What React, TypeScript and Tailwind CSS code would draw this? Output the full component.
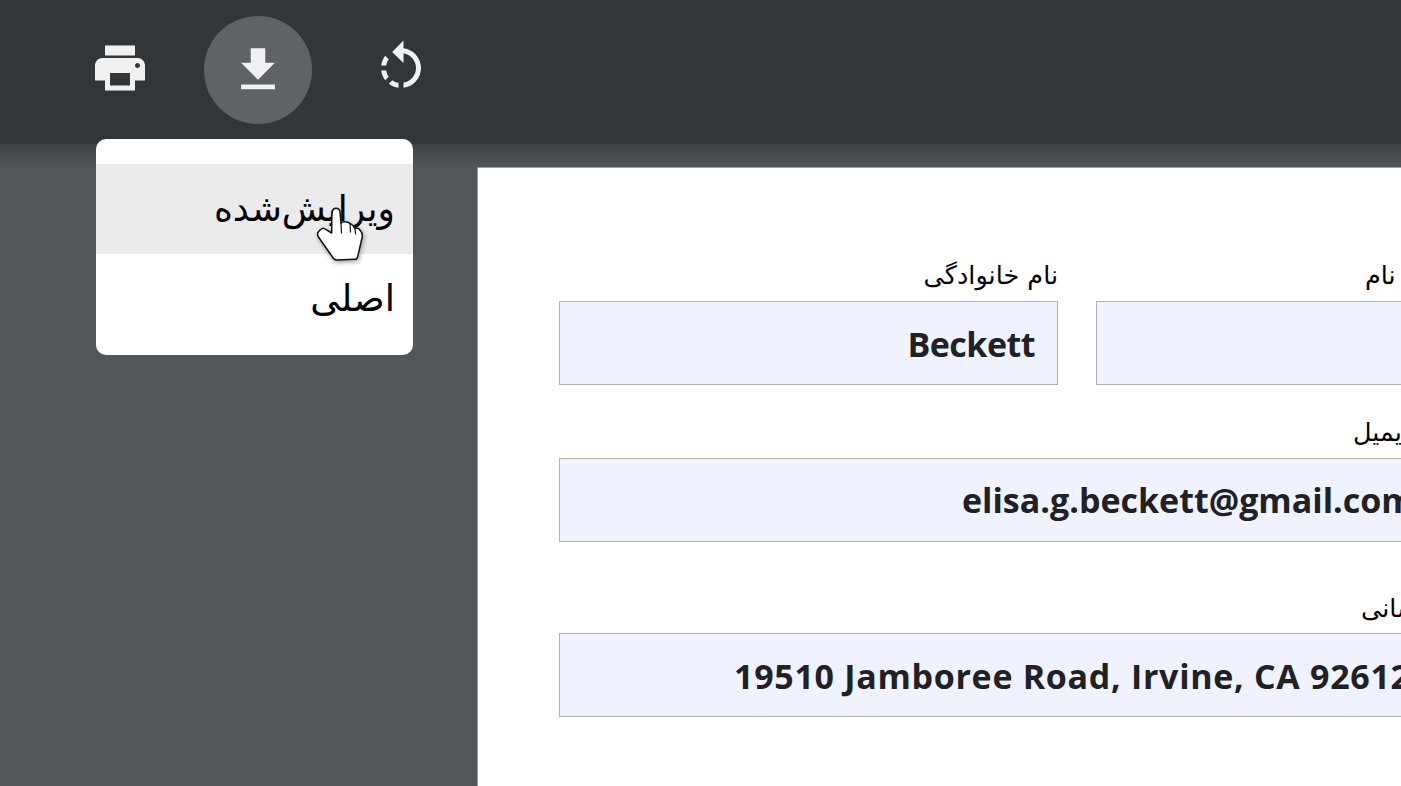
const arabic = "font-['DejaVu_Sans','Noto_Sans',sans-serif]";
const value = "font-['Open_Sans','Noto_Sans',sans-serif] font-bold text-[34px] text-[#202124]";

function Field({ className, children }: { className?: string; children?: React.ReactNode }) {
  return (
    <div className={`h-[84px] bg-[#f0f2fd] border border-[#b2b2b2] flex items-center whitespace-nowrap overflow-hidden ${value} ${className ?? ''}`}>
      {children}
    </div>
  );
}

export default function App() {
  return (
    <div className="relative w-[1401px] h-[786px] overflow-hidden bg-[#525659]">
      {/* Toolbar */}
      <header className="relative h-[144px] bg-[#323639] flex items-start pt-4 pl-[66px] text-[#f1f1f1]">
        <button className="w-[108px] h-[108px] rounded-full flex items-center justify-center">
          <svg width="60" height="60" viewBox="0 0 24 24" fill="currentColor" className="-mt-1">
            <path d="M19 8H5c-1.66 0-3 1.34-3 3v6h4v4h12v-4h4v-6c0-1.66-1.34-3-3-3zm-3 11H8v-5h8v5zm3-7c-.55 0-1-.45-1-1s.45-1 1-1 1 .45 1 1-.45 1-1 1zm-1-9H6v4h12V3z" />
          </svg>
        </button>
        <button className="ml-[30px] w-[108px] h-[108px] rounded-full bg-[#5f6368] flex items-center justify-center">
          <svg width="58" height="58" viewBox="0 0 24 24" fill="currentColor">
            <path d="M19 9h-4V3H9v6H5l7 7 7-7zM5 18v2h14v-2H5z" />
          </svg>
        </button>
        <button className="ml-[35px] w-[108px] h-[108px] rounded-full flex items-center justify-center">
          <svg width="60" height="60" viewBox="0 0 24 24" fill="currentColor" className="-mt-1">
            <path d="M7.11 8.53L5.7 7.11C4.8 8.27 4.24 9.61 4.07 11h2.02c.14-.87.49-1.72 1.02-2.47zM6.09 13H4.07c.17 1.39.72 2.73 1.62 3.89l1.41-1.42c-.52-.75-.87-1.59-1.01-2.47zm1.01 5.32c1.16.9 2.51 1.44 3.9 1.61V17.9c-.87-.15-1.71-.49-2.46-1.03L7.1 18.32zM13 4.07V1L8.45 5.55 13 10V6.09c2.84.48 5 2.94 5 5.91s-2.16 5.43-5 5.91v2.02c3.95-.49 7-3.85 7-7.93s-3.05-7.44-7-7.93z" />
          </svg>
        </button>
      </header>

      {/* Toolbar shadow */}
      <div className="absolute left-0 right-0 top-[144px] h-[24px] bg-gradient-to-b from-[#3f4346] to-[#525659]" />

      {/* Document page */}
      <main className="relative ml-[477px] mt-[23px] w-[1200px] h-[700px] bg-white border-l border-t border-[#9a9c9e] pl-[81px] pt-[90px]">
        <div className="flex gap-[38px] items-end">
          <div className="w-[499px]">
            <p className={`text-right text-[25.5px] leading-[34px] mb-[9px] ${arabic} text-black`}>نام خانوادگی</p>
            <Field className="justify-end pr-[22px] tracking-[-0.5px] pt-[2px]">Beckett</Field>
          </div>
          <div className="w-[499px]">
            <p className={`pl-[269px] text-[25.5px] leading-[34px] mb-[9px] ${arabic} text-black`}>نام</p>
            <Field />
          </div>
        </div>
        <p className={`pl-[794px] mt-[30px] mb-[9px] text-[25.5px] leading-[34px] ${arabic} text-black`}>ایمیل</p>
        <Field className="w-[1036px] pl-[402px]">elisa.g.beckett@gmail.com</Field>
        <p className={`pl-[802px] mt-[49px] mb-[8px] text-[25.5px] leading-[34px] ${arabic} text-black`}>نشانی</p>
        <Field className="w-[1036px] pl-[174px] tracking-[0.7px] pt-[2px]">19510 Jamboree Road, Irvine, CA 92612</Field>
      </main>

      {/* Download menu */}
      <div className="absolute left-[96px] top-[139px] w-[317px] h-[216px] bg-white rounded-[10px] pt-[25px]">
        <div className={`h-[90px] bg-[#ebebeb] flex items-center justify-end pr-[18px] text-[36px] text-black ${arabic}`}>ویرایش‌شده</div>
        <div className={`h-[90px] flex items-center justify-end pr-[18px] text-[37px] text-black ${arabic}`}>اصلی</div>
      </div>

      {/* Pointer */}
      <svg className="absolute left-[314px] top-[205px] drop-shadow-[1px_2px_2px_rgba(0,0,0,0.35)]" width="54" height="60" viewBox="0 0 54 60">
        <path
          d="M18.300 6.700C18.800 4.400 20.200 3.300 21.900 3.300C24 3.300 25.600 4.700 26 6.700L27 18.300C28.300 16.900 29.700 16.500 31 16.700C33.300 16.900 35 17.600 36 18.300C38 19.300 40 21.300 41 23.300C43 22.800 45 23.500 46 25C47.500 26.700 48.500 29 48.300 31.700L43.700 51.700C43.200 53.300 42.300 54.300 41 54.300L22.700 55C21 55 20 54.300 19.300 53.300L4.300 31.700C3.300 29.700 3.500 27.700 4.500 26.700C6 25 8 23.200 9.300 23.300C11 23.500 15 27 17.700 28L17.800 12Z"
          fill="#fff"
          stroke="#111"
          strokeWidth="1.5"
          strokeLinejoin="round"
        />
        <path d="M27 18.300L27.500 28M36 18.800L36.500 27M41 23.500L41.500 29" fill="none" stroke="#111" strokeWidth="1.2" strokeLinecap="round" />
      </svg>
    </div>
  );
}
